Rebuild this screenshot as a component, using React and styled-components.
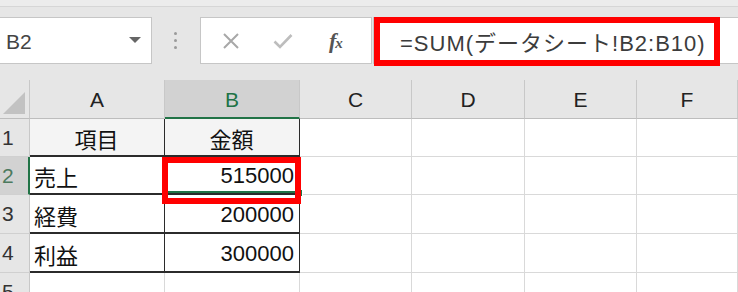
import React from "react";
import styled, { createGlobalStyle } from "styled-components";

const GlobalStyle = createGlobalStyle`
  html, body {
    margin: 0;
    padding: 0;
    background: #ffffff;
    overflow: hidden;
  }
`;

const FONT = `"Liberation Sans", "Noto Sans CJK JP", sans-serif`;

const Page = styled.div`
  position: relative;
  width: 738px;
  height: 292px;
  overflow: hidden;
  font-family: ${FONT};
`;

const Toolbar = styled.div`
  height: 80px;
  box-sizing: border-box;
  background: #e6e6e6;
  border-top: 6px solid #ececec;
  box-shadow: inset 0 1px 0 #d6d6d6;
  padding-top: 11px;
  display: flex;
  align-items: flex-start;
`;

const NameBox = styled.div`
  width: 153px;
  height: 47px;
  margin-left: -1px;
  box-sizing: border-box;
  background: #fff;
  border: 1px solid #c6c6c6;
  display: flex;
  align-items: center;
  justify-content: space-between;
  padding: 3px 10px 0 6px;
  font-size: 21px;
  color: #444;
`;

const Caret = styled.span`
  width: 0;
  height: 0;
  border-left: 6px solid transparent;
  border-right: 6px solid transparent;
  border-top: 6px solid #666;
  margin-top: -4px;
`;

const Dots = styled.div`
  width: 48px;
  height: 47px;
  display: flex;
  flex-direction: column;
  align-items: center;
  justify-content: center;
  gap: 4px;
  padding-right: 2px;
  box-sizing: border-box;

  span {
    width: 3px;
    height: 3px;
    border-radius: 50%;
    background: #9a9a9a;
  }
`;

const FuncBox = styled.div`
  width: 172px;
  height: 47px;
  box-sizing: border-box;
  background: #fff;
  border: 1px solid #c6c6c6;
  display: flex;
  align-items: center;
  padding-left: 21px;
  gap: 33px;
`;

const Fx = styled.span`
  font-family: "Liberation Serif", "DejaVu Serif", serif;
  font-style: italic;
  font-weight: bold;
  font-size: 22px;
  color: #555;
  margin-left: 3px;
  letter-spacing: -1px;

  sub {
    font-size: 15px;
    vertical-align: 0;
  }
`;

const FormulaInput = styled.div`
  flex: 1;
  height: 47px;
  margin-left: 1px;
  box-sizing: border-box;
  background: #fff;
  border: 1px solid #c6c6c6;
  border-right: none;
  display: flex;
  align-items: center;
  padding: 0 0 0 26px;
  font-size: 22px;
  letter-spacing: 1px;
  color: #3c3c3c;
  white-space: nowrap;
`;

const Sheet = styled.div`
  display: grid;
  grid-template-columns: 30px 135px 135px 112px 113px 112px 1fr;
  grid-template-rows: 39px 38px 38px 39px 39px 39px;
`;

const Corner = styled.div`
  background: #e6e6e6;
  border-right: 1px solid #c8c8c8;
  border-bottom: 1px solid #bdbdbd;
  position: relative;

  &::after {
    content: "";
    position: absolute;
    right: 4px;
    bottom: 4px;
    border-left: 22px solid transparent;
    border-bottom: 22px solid #c2c2c2;
  }
`;

const ColHead = styled.div`
  background: ${(p) => (p.$active ? "#d2d2d2" : "#e6e6e6")};
  color: ${(p) => (p.$active ? "#217346" : "#222")};
  border-right: 1px solid #c8c8c8;
  border-bottom: ${(p) => (p.$active ? "2px solid #217346" : "1px solid #bdbdbd")};
  display: flex;
  align-items: center;
  justify-content: center;
  font-size: 21px;
  padding-top: 2px;
`;

const RowHead = styled.div`
  background: ${(p) => (p.$active ? "#d2d2d2" : "#e6e6e6")};
  color: ${(p) => (p.$active ? "#4c7a5e" : "#333")};
  border-right: ${(p) => (p.$active ? "2px solid #217346" : "1px solid #c8c8c8")};
  border-bottom: 1px solid #d0d0d0;
  display: flex;
  align-items: center;
  padding-left: 2px;
  font-size: 21px;
`;

const Cell = styled.div`
  background: ${(p) => (p.$head ? "#f4f4f4" : "#fff")};
  border-right: 1px solid ${(p) => (p.$boxed ? "#2b2b2b" : "#d9d9d9")};
  border-bottom: ${(p) => (p.$boxed ? "2px solid #2b2b2b" : "1px solid #d9d9d9")};
  display: flex;
  align-items: center;
  justify-content: ${(p) => p.$align || "flex-start"};
  padding: 2px 5px 0 4px;
  font-size: 22px;
  color: #111;
  white-space: nowrap;
  overflow: hidden;
`;

const ActiveCell = styled(Cell)`
  position: relative;
  overflow: visible;
  box-shadow: inset 0 0 0 2px #217346;

  &::after {
    content: "";
    position: absolute;
    right: -4px;
    bottom: -4px;
    width: 6px;
    height: 6px;
    background: #217346;
    border: 1px solid #fff;
  }
`;

const RedBox = styled.div`
  position: absolute;
  box-sizing: border-box;
  border: 6px solid #ff0000;
`;

const columns = ["A", "B", "C", "D", "E", "F"];

const rows = [
  { n: 1, a: "項目", b: "金額", head: true },
  { n: 2, a: "売上", b: "515000", active: true },
  { n: 3, a: "経費", b: "200000" },
  { n: 4, a: "利益", b: "300000" },
  { n: 5 },
];

function CloseIcon() {
  return (
    <svg width="18" height="18" viewBox="0 0 18 18">
      <path d="M2 2 L16 16 M16 2 L2 16" stroke="#a8a8a8" strokeWidth="2" fill="none" />
    </svg>
  );
}

function CheckIcon() {
  return (
    <svg width="20" height="16" viewBox="0 0 20 16">
      <path d="M1.5 8.5 L7 14 L18.5 2" stroke="#bdbdbd" strokeWidth="2.6" fill="none" />
    </svg>
  );
}

export default function App() {
  return (
    <Page>
      <GlobalStyle />
      <Toolbar>
        <NameBox>
          <span>B2</span>
          <Caret />
        </NameBox>
        <Dots>
          <span />
          <span />
          <span />
        </Dots>
        <FuncBox>
          <CloseIcon />
          <CheckIcon />
          <Fx>
            f<sub>x</sub>
          </Fx>
        </FuncBox>
        <FormulaInput>=SUM(データシート!B2:B10)</FormulaInput>
      </Toolbar>
      <Sheet>
        <Corner />
        {columns.map((c) => (
          <ColHead key={c} $active={c === "B"}>
            {c}
          </ColHead>
        ))}
        {rows.map((r) => (
          <React.Fragment key={r.n}>
            <RowHead $active={r.active}>{r.n}</RowHead>
            {r.a !== undefined ? (
              <>
                <Cell $boxed $head={r.head} $align={r.head ? "center" : "flex-start"}>
                  {r.a}
                </Cell>
                {r.active ? (
                  <ActiveCell $boxed $align="flex-end">
                    {r.b}
                  </ActiveCell>
                ) : (
                  <Cell $boxed $head={r.head} $align={r.head ? "center" : "flex-end"}>
                    {r.b}
                  </Cell>
                )}
              </>
            ) : (
              <>
                <Cell />
                <Cell />
              </>
            )}
            <Cell />
            <Cell />
            <Cell />
            <Cell />
          </React.Fragment>
        ))}
      </Sheet>
      <RedBox style={{ left: 374, top: 17, width: 346, height: 49 }} />
      <RedBox style={{ left: 162, top: 157, width: 139, height: 47 }} />
    </Page>
  );
}
